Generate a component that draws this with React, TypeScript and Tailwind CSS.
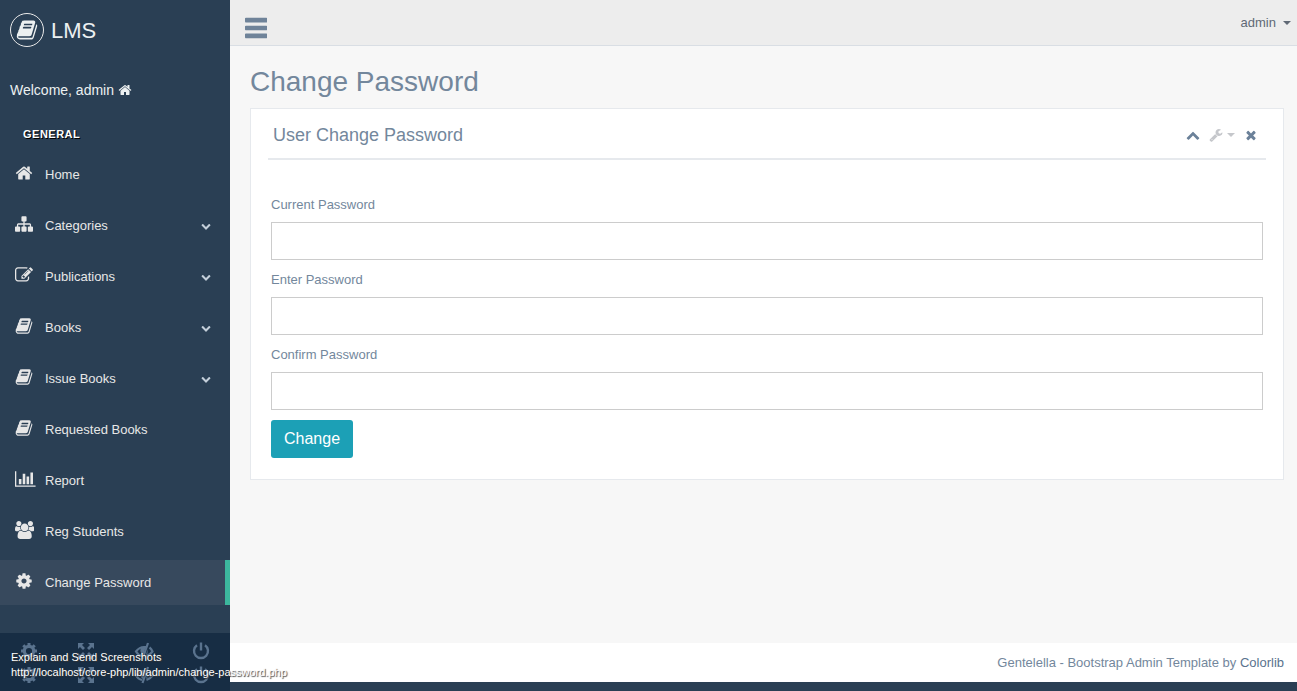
import React from "react";

type IconDef = { w: number; d: string };

const icons: Record<string, IconDef> = {
  home: { w: 1792, d: "M1472 992v480q0 26-19 45t-45 19h-384v-384h-256v384h-384q-26 0-45-19t-19-45v-480q0-1 .5-3t.5-3l575-474 575 474q1 2 1 6zm223-69l-62 74q-8 9-21 11h-3q-13 0-21-7l-692-577-692 577q-12 8-24 7-13-2-21-11l-62-74q-8-10-7-23.5t11-21.5l719-599q32-26 76-26t76 26l244 204v-195q0-14 9-23t23-9h192q14 0 23 9t9 23v408l219 182q10 8 11 21.5t-7 23.5z" },
  sitemap: { w: 1792, d: "M1792 1248v320q0 40-28 68t-68 28h-320q-40 0-68-28t-28-68v-320q0-40 28-68t68-28h96v-192h-512v192h96q40 0 68 28t28 68v320q0 40-28 68t-68 28h-320q-40 0-68-28t-28-68v-320q0-40 28-68t68-28h96v-192h-512v192h96q40 0 68 28t28 68v320q0 40-28 68t-68 28h-320q-40 0-68-28t-28-68v-320q0-40 28-68t68-28h96v-192q0-52 38-90t90-38h512v-192h-96q-40 0-68-28t-28-68v-320q0-40 28-68t68-28h320q40 0 68 28t28 68v320q0 40-28 68t-68 28h-96v192h512q52 0 90 38t38 90v192h96q40 0 68 28t28 68z" },
  edit: { w: 1792, d: "M888 1184l116-116-152-152-116 116v56h96v96h56zm440-720q-16-16-33 1l-350 350q-17 17-1 33t33-1l350-350q17-17 1-33zm80 594v190q0 119-84.5 203.5t-203.5 84.5h-832q-119 0-203.5-84.5t-84.5-203.5v-832q0-119 84.5-203.5t203.5-84.5h832q63 0 117 25 15 7 18 23 3 17-9 29l-49 49q-14 14-32 8-23-6-45-6h-832q-66 0-113 47t-47 113v832q0 66 47 113t113 47h832q66 0 113-47t47-113v-126q0-13 9-22l64-64q15-15 35-7t20 29zm-96-738l288 288-672 672h-288v-288zm444 132l-92 92-288-288 92-92q28-28 68-28t68 28l152 152q28 28 28 68t-28 68z" },
  book: { w: 1792, d: "M1703 478q40 57 18 129l-275 906q-19 64-76.5 107.5t-122.5 43.5h-923q-77 0-148.5-53.5t-99.5-131.5q-24-67-2-127 0-4 3-27t4-37q1-8-3-21.5t-3-19.5q2-11 8-21t16.5-23.5 16.5-23.5q23-38 45-91.5t30-91.5q3-10 .5-30t-.5-28q3-11 17-28t17-23q21-36 42-92t25-90q1-9-2.5-32t.5-28q4-13 22-30.5t22-22.5q19-26 42.5-84.5t27.5-96.5q1-8-3-25.5t-2-26.5q2-8 9-18t18-23 17-21q8-12 16.5-30.5t15-35 16-36 19.5-32 26.5-23.5 36-11.5 47.5 5.5l-1 3q38-9 51-9h761q74 0 114 56t18 130l-274 906q-36 119-71.5 153.5t-128.5 34.5h-869q-27 0-38 15-11 16-1 43 24 70 144 70h923q29 0 56-15.5t35-41.5l300-987q7-22 5-57 38 15 59 43zm-1064 2q-4 13 2 22.5t20 9.5h608q13 0 25.5-9.5t16.5-22.5l21-64q4-13-2-22.5t-20-9.5h-608q-13 0-25.5 9.5t-16.5 22.5zm-83 256q-4 13 2 22.5t20 9.5h608q13 0 25.5-9.5t16.5-22.5l21-64q4-13-2-22.5t-20-9.5h-608q-13 0-25.5 9.5t-16.5 22.5z" },
  chart: { w: 2048, d: "M640 896v512h-256v-512h256zm384-512v1024h-256v-1024h256zm1024 1152v128h-2048v-1536h128v1408h1920zm-640-896v768h-256v-768h256zm384-384v1152h-256v-1152h256z" },
  users: { w: 1920, d: "M593 896q-162 5-265 128h-134q-82 0-138-40.5t-56-118.5q0-353 124-353 6 0 43.5 21t97.5 42.5 119 21.5q67 0 133-23-5 37-5 66 0 139 81 256zm1071 637q0 120-73 189.5t-194 69.5h-874q-121 0-194-69.5t-73-189.5q0-53 3.5-103.5t14-109 26.5-108.5 43-97.5 62-81 85.5-53.5 111.5-20q10 0 43 21.5t73 48 107 48 135 21.5 135-21.5 107-48 73-48 43-21.5q61 0 111.5 20t85.5 53.5 62 81 43 97.5 26.5 108.5 14 109 3.5 103.5zm-1024-1277q0 106-75 181t-181 75-181-75-75-181 75-181 181-75 181 75 75 181zm704 384q0 159-112.5 271.5t-271.5 112.5-271.5-112.5-112.5-271.5 112.5-271.5 271.5-112.5 271.5 112.5 112.5 271.5zm576 225q0 78-56 118.5t-138 40.5h-134q-103-123-265-128 81-117 81-256 0-29-5-66 66 23 133 23 59 0 119-21.5t97.5-42.5 43.5-21q124 0 124 353zm-128-609q0 106-75 181t-181 75-181-75-75-181 75-181 181-75 181 75 75 181z" },
  cog: { w: 1792, d: "M1152 896q0-106-75-181t-181-75-181 75-75 181 75 181 181 75 181-75 75-181zm512-109v222q0 12-8 23t-20 13l-185 28q-19 54-39 91 35 50 107 138 10 12 10 25t-9 23q-27 37-99 108t-94 71q-12 0-26-9l-138-108q-44 23-91 38-16 136-29 186-7 28-36 28h-222q-14 0-24.5-8.5t-11.5-21.5l-28-184q-49-16-90-37l-141 107q-10 9-25 9-14 0-25-11-126-114-165-168-7-10-7-23 0-12 8-23 15-21 51-66.5t54-70.5q-27-50-41-99l-183-27q-13-2-21-12.5t-8-23.5v-222q0-12 8-23t19-13l186-28q14-46 39-92-40-57-107-138-10-12-10-24 0-10 9-23 26-36 98.5-107.5t94.5-71.5q13 0 26 10l138 107q44-23 91-38 16-136 29-186 7-28 36-28h222q14 0 24.5 8.5t11.5 21.5l28 184q49 16 90 37l142-107q9-9 24-9 13 0 25 10 129 119 165 170 7 8 7 22 0 12-8 23-15 21-51 66.5t-54 70.5q26 50 41 98l183 28q13 2 21 12.5t8 23.5z" },
  down: { w: 1792, d: "M1683 808l-742 741q-19 19-45 19t-45-19l-742-741q-19-19-19-45.5t19-45.5l166-165q19-19 45-19t45 19l531 531 531-531q19-19 45-19t45 19l166 165q19 19 19 45.5t-19 45.5z" },
  up: { w: 1792, d: "M1683 1331l-166 165q-19 19-45 19t-45-19l-531-531-531 531q-19 19-45 19t-45-19l-166-165q-19-19-19-45.5t19-45.5l742-741q19-19 45-19t45 19l742 741q19 19 19 45.5t-19 45.5z" },
  wrench: { w: 1792, d: "M448 1472q0-26-19-45t-45-19-45 19-19 45 19 45 45 19 45-19 19-45zm644-420l-682 682q-37 37-90 37-52 0-91-37l-106-108q-38-36-38-90 0-53 38-91l681-681q39 98 114.5 173.5t173.5 114.5zm634-435q0 39-23 106-47 134-164.5 217.5t-258.5 83.5q-185 0-316.5-131.5t-131.5-316.5 131.5-316.5 316.5-131.5q58 0 121.5 16.5t107.5 46.5q16 11 16 28t-16 28l-293 169v224l193 107q5-3 79-48.5t135.5-81 70.5-35.5q15 0 23.5 10t8.5 25z" },
  close: { w: 1792, d: "M1490 1322q0 40-28 68l-136 136q-28 28-68 28t-68-28l-294-294-294 294q-28 28-68 28t-68-28l-136-136q-28-28-28-68t28-68l294-294-294-294q-28-28-28-68t28-68l136-136q28-28 68-28t68 28l294 294 294-294q28-28 68-28t68 28l136 136q28 28 28 68t-28 68l-294 294 294 294q28 28 28 68z" },
  bars: { w: 1536, d: "M1536 1344v192q0 26-19 45t-45 19h-1408q-26 0-45-19t-19-45v-192q0-26 19-45t45-19h1408q26 0 45 19t19 45zm0-544v192q0 26-19 45t-45 19h-1408q-26 0-45-19t-19-45v-192q0-26 19-45t45-19h1408q26 0 45 19t19 45zm0-544v192q0 26-19 45t-45 19h-1408q-26 0-45-19t-19-45v-192q0-26 19-45t45-19h1408q26 0 45 19t19 45z" },
};

function Icon({ name, className }: { name: string; className: string }) {
  const icon = icons[name];
  return (
    <svg viewBox={`0 0 ${icon.w} 1792`} className={className} fill="currentColor" aria-hidden="true">
      <path d={icon.d} />
    </svg>
  );
}

function Caret() {
  return (
    <svg viewBox="0 0 8 4" className="h-1 w-2" fill="currentColor" aria-hidden="true">
      <path d="M0 0h8L4 4z" />
    </svg>
  );
}

const menu = [
  { label: "Home", icon: "home" },
  { label: "Categories", icon: "sitemap", more: true },
  { label: "Publications", icon: "edit", more: true },
  { label: "Books", icon: "book", more: true },
  { label: "Issue Books", icon: "book", more: true },
  { label: "Requested Books", icon: "book" },
  { label: "Report", icon: "chart" },
  { label: "Reg Students", icon: "users" },
  { label: "Change Password", icon: "cog", active: true },
];

const tools = [
  {
    label: "Settings",
    node: (
      <svg viewBox="0 0 18 18" className="size-[18px]" fill="none" stroke="currentColor" aria-hidden="true">
        <circle cx="9" cy="9" r="4.7" strokeWidth="3.2" />
        <path
          d="M9 1v3M9 14v3M1 9h3M14 9h3M3.3 3.3l2.2 2.2M12.5 12.5l2.2 2.2M3.3 14.7l2.2-2.2M12.5 5.5l2.2-2.2"
          strokeWidth="3"
        />
      </svg>
    ),
  },
  {
    label: "Full screen",
    node: (
      <svg viewBox="0 0 18 18" className="size-[18px]" fill="currentColor" aria-hidden="true">
        <path d="M1 1h6L5 3l3 3-2 2-3-3-2 2zM17 1v6l-2-2-3 3-2-2 3-3-2-2zM1 17v-6l2 2 3-3 2 2-3 3 2 2zM17 17h-6l2-2-3-3 2-2 3 3 2-2z" />
      </svg>
    ),
  },
  {
    label: "Lock",
    node: (
      <svg viewBox="0 0 20 18" className="h-[18px] w-5" fill="none" stroke="currentColor" strokeWidth="2.2" aria-hidden="true">
        <path d="M8 14Q4 13 2 9.5 5.5 5 10 5h2M15.5 5.5q2 1.500 3 4-2.500 3.500-6 4.500M14 1 8.500 17" />
        <path d="M10 4.500q-4.500 1-3.500 5 .5 2.500 2.500 3.500L12 4.500zM13.500 7v4.500l-1.500 1.500z" fill="currentColor" stroke="none" />
      </svg>
    ),
  },
  {
    label: "Logout",
    node: (
      <svg viewBox="0 0 18 18" className="size-[18px]" fill="none" stroke="currentColor" strokeWidth="2.4" aria-hidden="true">
        <path d="M5 3.300a7 7 0 1 0 8 0M9 .5v8" />
      </svg>
    ),
  },
];

function Tools() {
  return (
    <div className="grid grid-cols-4">
      {tools.map((t) => (
        <a key={t.label} href="#" aria-label={t.label} className="flex h-6 items-center justify-center text-[#5a738e]">
          {t.node}
        </a>
      ))}
    </div>
  );
}

function Sidebar() {
  return (
    <aside className="flex w-[230px] shrink-0 flex-col bg-[#2a3f54] text-[#ecf0f1]">
      <a href="#" className="flex h-[60px] items-center gap-[7px] pl-[10px] text-[22px]">
        <span className="flex size-[34px] items-center justify-center rounded-full border border-[#eaeaea]">
          <Icon name="book" className="size-[22px]" />
        </span>
        LMS
      </a>
      <p className="mt-5 flex items-center gap-1 pl-[10px] text-sm">
        Welcome, admin <Icon name="home" className="size-[14px]" />
      </p>
      <h3 className="mt-[26px] mb-[10px] pl-[23px] text-[11px] leading-4 font-bold tracking-[0.5px] text-white uppercase [text-shadow:1px_1px_#000]">
        General
      </h3>
      <nav className="flex flex-col">
        {menu.map((m) => (
          <a
            key={m.label}
            href="#"
            className={`mb-[6px] flex h-[45px] items-center border-r-[5px] pr-[14px] pl-[15px] text-[13px] text-[#e7e7e7] ${
              m.active ? "border-[#3cb79d] bg-[#37495d]" : "border-transparent"
            }`}
          >
            <span className="mb-1 w-[30px]">
              <Icon name={m.icon} className="h-[18px] w-auto" />
            </span>
            <span className="grow">{m.label}</span>
            {m.more && <Icon name="down" className="size-[10px] text-[#c4cfda]" />}
          </a>
        ))}
      </nav>
      <div className="relative mt-auto h-[58px] bg-[#172d44] pt-[6px]">
        <Tools />
        <Tools />
        <div className="absolute top-[17px] left-[11px] z-10 text-[11px] leading-[15px] whitespace-nowrap text-white [text-shadow:1px_1px_1px_#333]">
          <p>Explain and Send Screenshots</p>
          <p>http://localhost/core-php/lib/admin/change-password.php</p>
        </div>
      </div>
    </aside>
  );
}

function Field({ id, label }: { id: string; label: string }) {
  return (
    <div className="flex flex-col">
      <label htmlFor={id} className="mb-[7px] leading-5">
        {label}
      </label>
      <input id={id} type="password" className="mb-[10px] h-[38px] w-full border border-[#ccc] bg-white px-3" />
    </div>
  );
}

export default function App() {
  return (
    <div className="flex min-h-screen bg-[#2a3f54] font-['Liberation_Sans',Arial,sans-serif] text-[13px] text-[#73879c]">
      <Sidebar />
      <div className="flex min-w-0 grow flex-col pb-[9px]">
        <header className="flex h-[46px] items-center justify-between border-b border-[#d9dee4] bg-[#ededed] pr-[6px] pl-[15px]">
          <button type="button" aria-label="Toggle menu" className="mt-[10px] text-[#6f8399]">
            <Icon name="bars" className="h-[26px] w-auto" />
          </button>
          <button type="button" className="flex items-center gap-[7px] text-[#606975]">
            admin <Caret />
          </button>
        </header>
        <main className="grow bg-[#f7f7f7] pt-[18px] pr-[13px] pb-5 pl-5">
          <h1 className="mb-[9px] text-[28px] leading-[35px]">Change Password</h1>
          <section className="border border-[#e6e9ed] bg-white px-[17px] pb-[21px]">
            <div className="flex h-[51px] items-center justify-between border-b-2 border-[#e6e9ed] pt-[2px] pr-2 pl-[5px]">
              <h2 className="text-lg">User Change Password</h2>
              <div className="flex items-center gap-[9px] text-[#6b8199]">
                <button type="button" aria-label="Collapse">
                  <Icon name="up" className="size-[14px]" />
                </button>
                <button type="button" aria-label="Options" className="flex items-center gap-1 text-[#c5c7cb]">
                  <Icon name="wrench" className="size-[14px]" />
                  <Caret />
                </button>
                <button type="button" aria-label="Close">
                  <Icon name="close" className="size-[14px]" />
                </button>
              </div>
            </div>
            <form className="px-[3px] pt-[35px]">
              <Field id="current" label="Current Password" />
              <Field id="new" label="Enter Password" />
              <Field id="confirm" label="Confirm Password" />
              <button type="button" className="h-[38px] rounded-[3px] bg-[#1ca0b6] px-[13px] text-base text-white">
                Change
              </button>
            </form>
          </section>
        </main>
        <footer className="flex h-[39px] items-center justify-end bg-white pr-[13px]">
          <p>
            Gentelella - Bootstrap Admin Template by{" "}
            <a href="#" className="text-[#5a738e]">
              Colorlib
            </a>
          </p>
        </footer>
      </div>
    </div>
  );
}
